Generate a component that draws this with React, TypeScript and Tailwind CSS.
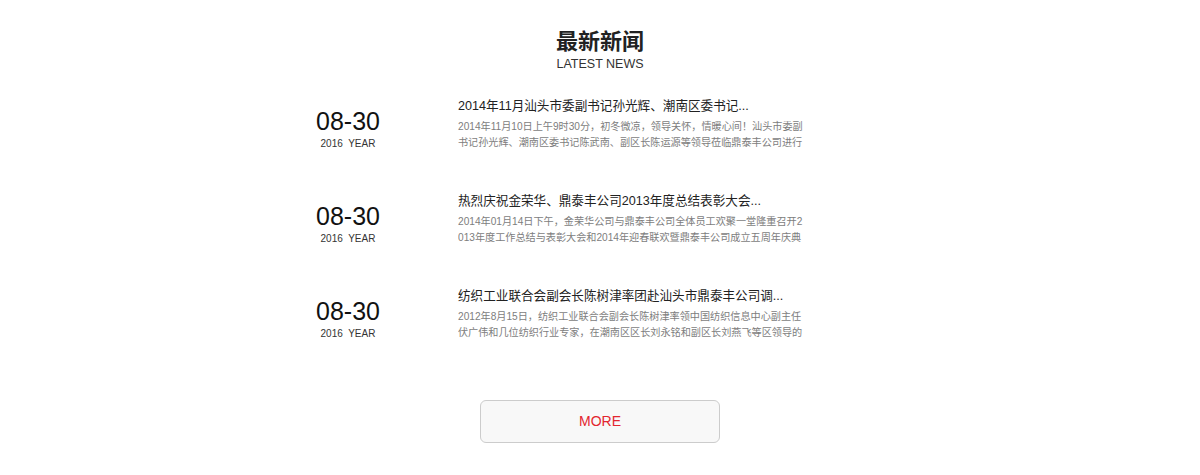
const news = [
  {
    title: '2014年11月汕头市委副书记孙光辉、潮南区委书记...',
    lines: [
      '2014年11月10日上午9时30分，初冬微凉，领导关怀，情暖心间！汕头市委副',
      '书记孙光辉、潮南区委书记陈武南、副区长陈运源等领导莅临鼎泰丰公司进行',
    ],
  },
  {
    title: '热烈庆祝金荣华、鼎泰丰公司2013年度总结表彰大会...',
    lines: [
      '2014年01月14日下午，金荣华公司与鼎泰丰公司全体员工欢聚一堂隆重召开2',
      '013年度工作总结与表彰大会和2014年迎春联欢暨鼎泰丰公司成立五周年庆典',
    ],
  },
  {
    title: '纺织工业联合会副会长陈树津率团赴汕头市鼎泰丰公司调...',
    lines: [
      '2012年8月15日，纺织工业联合会副会长陈树津率领中国纺织信息中心副主任',
      '伏广伟和几位纺织行业专家，在潮南区区长刘永铭和副区长刘燕飞等区领导的',
    ],
  },
]

export default function App() {
  return (
    <div
      className="w-full h-[475px] bg-white"
      style={{ fontFamily: '"Liberation Sans", Arial, "Noto Sans CJK SC", sans-serif' }}
    >
      {/* Heading */}
      <div className="pt-[30px] flex flex-col items-center">
        <h2 className="text-[22px] leading-[24px] font-bold text-[#222]">最新新闻</h2>
        <p className="mt-[3px] text-[12.5px] leading-[14px] text-[#333]">LATEST NEWS</p>
      </div>

      {/* News list */}
      <div className="w-[600px] mx-auto mt-[27px] flex flex-col gap-[42px]">
        {news.map((item, i) => (
          <div key={i} className="flex h-[53px]">
            <div className="w-[96px] shrink-0 flex flex-col items-center pt-[9px]">
              <span className="text-[25px] leading-[28px] text-[#111]">08-30</span>
              <span className="mt-[3px] text-[10px] leading-[12px] text-[#333] whitespace-pre">
                2016  YEAR
              </span>
            </div>
            <div className="ml-[62px] w-[360px] flex flex-col">
              <h3 className="text-[12.6px] leading-[16px] text-[#222] whitespace-nowrap">{item.title}</h3>
              <div className="mt-[5px] text-[10.15px] leading-[16px] text-[#7d7d7d]">
                {item.lines.map((line, j) => (
                  <p key={j} className="whitespace-nowrap overflow-hidden">{line}</p>
                ))}
              </div>
            </div>
          </div>
        ))}
      </div>

      {/* More button */}
      <div className="mt-[59px] flex justify-center">
        <button className="w-[240px] h-[43px] rounded-[6px] border border-[#cccccc] bg-[#f8f8f8] text-[14px] text-[#e3262f]">
          MORE
        </button>
      </div>
    </div>
  )
}
